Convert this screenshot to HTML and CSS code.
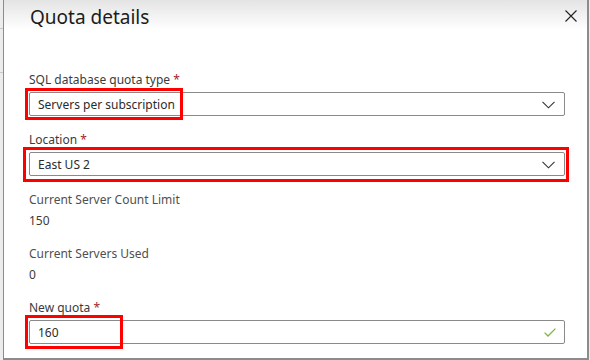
FILE: index.html
```html
<!DOCTYPE html>
<html lang="en">
<head>
    <meta charset="UTF-8">
    <title>Quota details</title>
    <link rel="stylesheet" href="styles.css">
</head>
<body>
    <div class="panel">
        <!-- Header -->
        <div class="panel-header">
            <h1 class="panel-title">Quota details</h1>
            <button class="close-btn" aria-label="Close">
                <svg width="12" height="12" viewBox="0 0 12 12"><path d="M0.5 0.5 L11.5 11.5 M11.5 0.5 L0.5 11.5" stroke="#222" stroke-width="1.1" fill="none"/></svg>
            </button>
        </div>

        <div class="panel-body">
            <div class="field">
                <div class="field-label">SQL database quota type <span class="req">*</span></div>
                <div class="dropdown">
                    <span>Servers per subscription</span>
                    <svg class="chevron" width="13" height="8" viewBox="0 0 13 8"><path d="M0.5 0.8 L6.5 6.8 L12.5 0.8" stroke="#333" stroke-width="1.1" fill="none"/></svg>
                </div>
                <div class="highlight highlight-type"></div>
            </div>

            <div class="field">
                <div class="field-label">Location <span class="req">*</span></div>
                <div class="dropdown">
                    <span>East US 2</span>
                    <svg class="chevron" width="13" height="8" viewBox="0 0 13 8"><path d="M0.5 0.8 L6.5 6.8 L12.5 0.8" stroke="#333" stroke-width="1.1" fill="none"/></svg>
                </div>
                <div class="highlight highlight-location"></div>
            </div>

            <div class="info">
                <div class="field-label">Current Server Count Limit</div>
                <div class="info-value">150</div>
            </div>

            <div class="info">
                <div class="field-label">Current Servers Used</div>
                <div class="info-value">0</div>
            </div>

            <div class="field">
                <div class="field-label">New quota <span class="req">*</span></div>
                <div class="dropdown">
                    <span>160</span>
                    <svg class="check" width="12" height="9" viewBox="0 0 12 9"><path d="M0.6 4.6 L4 8 L11.4 0.6" stroke="#7cb342" stroke-width="1.3" fill="none"/></svg>
                </div>
                <div class="highlight highlight-quota"></div>
            </div>
        </div>
    </div>
</body>
</html>
```

FILE: styles.css
```css
* {
    box-sizing: border-box;
    margin: 0;
    padding: 0;
}

body {
    font-family: 'Noto Sans', 'Open Sans', sans-serif;
    background-color: #ececec;
    /* little ticks of the page behind the blade */
    background-image:
        linear-gradient(#c8c8c8, #c8c8c8),
        linear-gradient(#c8c8c8, #c8c8c8);
    background-size: 3px 1px, 3px 1px;
    background-position: 0 28px, 0 72px;
    background-repeat: no-repeat;
    width: 590px;
    height: 360px;
    overflow: hidden;
    padding-left: 3px;
}

.panel {
    width: 586px;
    height: 360px;
    background: #fff;
    border-left: 1px solid #8c8c8c;
    border-right: 2px solid #8c8c8c;
    border-bottom: 2px solid #8c8c8c;
    position: relative;
}

.panel-header {
    display: flex;
    justify-content: space-between;
    align-items: center;
    height: 34px;
    padding: 0 6px 0 26px;
    background: linear-gradient(to bottom, #e4e4e4, #ffffff 30px);
}

.panel-title {
    font-size: 19px;
    font-weight: 400;
    color: #1b1b1b;
    margin-top: -1px;
}

.close-btn {
    background: none;
    border: none;
    width: 20px;
    height: 20px;
    display: flex;
    align-items: center;
    justify-content: center;
    margin-top: -3px;
}

.panel-body {
    padding: 38px 22px 0 25px;
}

.field {
    position: relative;
    margin-bottom: 16px;
}

.field-label {
    font-size: 12px;
    line-height: 16px;
    color: #3b3b3b;
    margin-bottom: 4px;
}

.req {
    color: #a4262c;
}

.dropdown {
    display: flex;
    justify-content: space-between;
    align-items: center;
    height: 24px;
    border: 1px solid #8a8a8a;
    border-radius: 2px;
    padding: 0 9px 0 8px;
    font-size: 12px;
    color: #2b2b2b;
    background: #fff;
}

.chevron {
    margin-top: 1px;
}

.check {
    margin-right: -1px;
}

.info {
    margin-bottom: 17px;
}

.info .field-label {
    color: #505050;
}

.info-value {
    font-size: 12px;
    line-height: 17px;
    color: #3b3b3b;
}

/* red boxes drawn over the screenshot */
.highlight {
    position: absolute;
    border: 3px solid #ff0000;
    pointer-events: none;
}

.highlight-type {
    left: -4px;
    top: 16px;
    width: 158px;
    height: 32px;
}

.highlight-location {
    left: -6px;
    top: 15px;
    width: 546px;
    height: 35px;
}

.highlight-quota {
    left: -4px;
    top: 15px;
    width: 98px;
    height: 34px;
}
```
